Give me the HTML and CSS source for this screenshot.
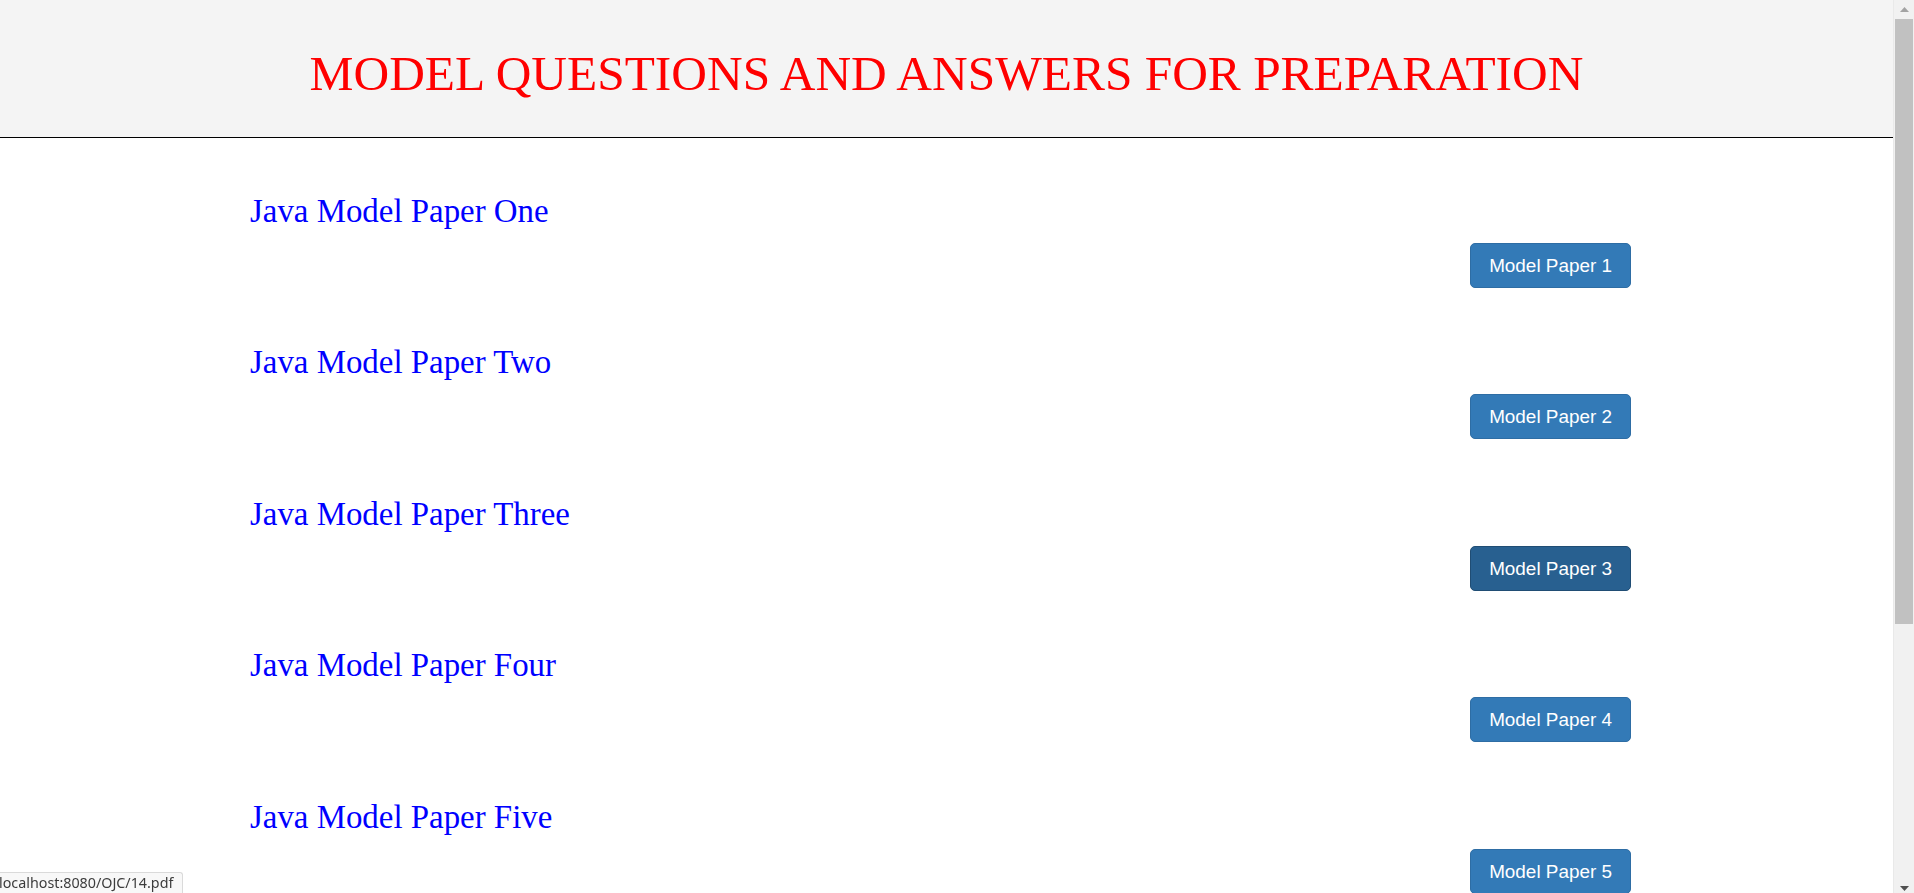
FILE: index.html
```html
<!DOCTYPE html>
<html lang="en">
<head>
<meta charset="utf-8">
<title>Model Questions and Answers</title>
<link rel="stylesheet" href="styles.css">
</head>
<body>
<div class="page">
  <header class="site-header">
    <h1 class="site-title">MODEL QUESTIONS AND ANSWERS FOR PREPARATION</h1>
  </header>
  <main class="papers">
    <section class="paper">
      <h2 class="paper-title">Java Model Paper One</h2>
      <a class="btn" href="#">Model Paper 1</a>
    </section>
    <section class="paper">
      <h2 class="paper-title">Java Model Paper Two</h2>
      <a class="btn" href="#">Model Paper 2</a>
    </section>
    <section class="paper">
      <h2 class="paper-title">Java Model Paper Three</h2>
      <a class="btn btn-hover" href="#">Model Paper 3</a>
    </section>
    <section class="paper">
      <h2 class="paper-title">Java Model Paper Four</h2>
      <a class="btn" href="#">Model Paper 4</a>
    </section>
    <section class="paper">
      <h2 class="paper-title">Java Model Paper Five</h2>
      <a class="btn" href="#">Model Paper 5</a>
    </section>
  </main>
</div>
<aside class="scrollbar" aria-hidden="true">
  <div class="sb-button sb-up">
    <svg width="9" height="5" viewBox="0 0 9 5"><polygon points="4.5,0 9,5 0,5" fill="#a3a3a3"/></svg>
  </div>
  <div class="sb-track">
    <div class="sb-thumb"></div>
  </div>
  <div class="sb-button sb-down">
    <svg width="9" height="5" viewBox="0 0 9 5"><polygon points="0,0 9,0 4.5,5" fill="#505050"/></svg>
  </div>
</aside>
<div class="status-bar">localhost:8080/OJC/14.pdf</div>
</body>
</html>
```
FILE: styles.css
```css
html, body {
  margin: 0;
  padding: 0;
  background: #ffffff;
  overflow: hidden;
}

body {
  display: flex;
  height: 100vh;
  font-family: "Liberation Serif", "Times New Roman", serif;
}

.page {
  flex: 1;
  min-width: 0;
}

.site-header {
  background: #f4f4f4;
  border-bottom: 1px solid #000000;
  padding: 46px 0 35px;
}

.site-title {
  margin: 0;
  font-size: 49.4px;
  line-height: 56px;
  font-weight: normal;
  color: #ff0000;
  text-align: center;
}

.papers {
  display: flex;
  flex-direction: column;
  gap: 54.4px;
  width: 1381px;
  margin-left: 250px;
  padding-top: 53px;
}

.paper {
  display: flex;
  flex-direction: column;
  gap: 12px;
}

.paper-title {
  margin: 0;
  font-size: 32.9px;
  line-height: 40px;
  font-weight: normal;
  color: #0000ff;
}

.btn {
  align-self: flex-end;
  display: inline-block;
  font-family: "Liberation Sans", Arial, sans-serif;
  font-size: 18.9px;
  line-height: 27px;
  padding: 8px 18px;
  color: #ffffff;
  background: #337ab7;
  border: 1px solid #2e6da4;
  border-radius: 5px;
  text-decoration: none;
  white-space: nowrap;
}

.btn-hover {
  background: #286090;
  border-color: #204d74;
}

.scrollbar {
  flex: 0 0 21px;
  display: flex;
  flex-direction: column;
  height: 100vh;
  background: #f1f1f1;
  border-left: 1px solid #e9e9e9;
  box-sizing: border-box;
}

.sb-button {
  height: 17px;
  display: flex;
  justify-content: center;
  padding-left: 1px;
}

.sb-up {
  align-items: flex-start;
  padding-top: 7px;
  box-sizing: border-box;
}

.sb-down {
  align-items: flex-end;
  padding-bottom: 2px;
  box-sizing: border-box;
}

.sb-button svg {
  display: block;
}

.sb-track {
  flex: 1;
  padding: 2px 1px 0 1px;
}

.sb-thumb {
  height: 605px;
  background: #c1c1c1;
}

.status-bar {
  position: fixed;
  left: 0;
  bottom: 0;
  height: 20px;
  padding: 0 9px 0 0;
  margin-left: -1px;
  background: #f8f8f8;
  border-top: 1px solid #dadada;
  border-right: 1px solid #dadada;
  border-top-right-radius: 3px;
  font-family: "Noto Sans", "Open Sans", sans-serif;
  font-size: 14.3px;
  line-height: 20px;
  color: #3c3c3c;
}
```
